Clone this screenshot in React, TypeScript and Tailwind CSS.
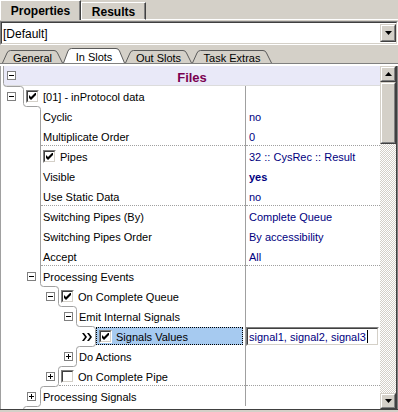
import React from "react";

type Row = {
  label: string;
  depth: number;
  value?: string;
  strong?: boolean;
  box?: "-" | "+";
  check?: boolean;
  sep?: boolean;
  selected?: boolean;
};

const rows: Row[] = [
  { label: "[01] - inProtocol data", depth: 0, box: "-", check: true },
  { label: "Cyclic", depth: 1, value: "no" },
  { label: "Multiplicate Order", depth: 1, value: "0", sep: true },
  { label: "Pipes", depth: 1, check: true, value: "32 :: CysRec :: Result" },
  { label: "Visible", depth: 1, value: "yes", strong: true },
  { label: "Use Static Data", depth: 1, value: "no", sep: true },
  { label: "Switching Pipes (By)", depth: 1, value: "Complete Queue" },
  { label: "Switching Pipes Order", depth: 1, value: "By accessibility" },
  { label: "Accept", depth: 1, value: "All", sep: true },
  { label: "Processing Events", depth: 1, box: "-" },
  { label: "On Complete Queue", depth: 2, box: "-", check: true },
  { label: "Emit Internal Signals", depth: 3, box: "-" },
  { label: "Signals Values", depth: 4, check: true, selected: true },
  { label: "Do Actions", depth: 3, box: "+" },
  { label: "On Complete Pipe", depth: 2, box: "+", check: false, sep: true },
  { label: "Processing Signals", depth: 1, box: "+" },
];

// x of the tree edge for each depth
const LINE = [23, 40, 58, 76, 95];
const GUTTER = ["w-[21px]", "w-[38px]", "w-[56px]", "w-[74px]", "w-[93px]"];
const BOXPL = ["pl-[4px]", "pl-[24px]", "pl-[43px]", "pl-[61px]", "pl-[79px]"];

// staircase outline of the tree, rounded at each step
const contour = (() => {
  const r = 3;
  let px = 3.5;
  let d = `M${px} 0`;
  [...rows.map((x) => x.depth), 0].forEach((depth, i) => {
    const y = 20 + 20 * i + 0.5;
    const x = LINE[depth] + 0.5;
    if (x !== px) {
      const s = x > px ? 1 : -1;
      d += ` V${y - r} Q${px} ${y} ${px + s * r} ${y} H${x - s * r} Q${x} ${y} ${x} ${y + r}`;
      px = x;
    }
  });
  return d + " V400";
})();

const Box = ({ plus }: { plus?: boolean }) => (
  <span className="relative flex h-[9px] w-[9px] items-center justify-center border border-[#808080] bg-white">
    <span className="h-px w-[5px] bg-black" />
    {plus && <span className="absolute h-[5px] w-px bg-black" />}
  </span>
);

const Check = ({ on }: { on: boolean }) => (
  <span className="flex h-[13px] w-[13px] shrink-0 border border-t-[#808080] border-l-[#808080] border-r-white border-b-white">
    <span className="flex flex-1 items-center justify-center border border-t-[#404040] border-l-[#404040] border-r-[#d4d0c8] border-b-[#d4d0c8] bg-white">
      {on && (
        <svg width="7" height="7" viewBox="0 0 7 7">
          <path d="M0 2L2 4L6 0H7V2L2 7L0 5Z" fill="#000" />
        </svg>
      )}
    </span>
  </span>
);

const Chevrons = () => (
  <svg width="10" height="8" viewBox="0 0 10 8">
    <path d="M0 0H2L5 4L2 8H0L3 4Z M5 0H7L10 4L7 8H5L8 4Z" fill="#000" />
  </svg>
);

const Raised = ({ children, className = "" }: { children?: React.ReactNode; className?: string }) => (
  <div className={`border border-t-[#d4d0c8] border-l-[#d4d0c8] border-r-[#404040] border-b-[#404040] bg-[#d4d0c8] ${className}`}>
    <div className="flex h-full w-full items-center justify-center border border-t-white border-l-white border-r-[#808080] border-b-[#808080]">
      {children}
    </div>
  </div>
);

const Arrow = ({ up }: { up?: boolean }) => (
  <svg width="7" height="4" viewBox="0 0 7 4">
    <path d={up ? "M3.5 0L7 4H0Z" : "M0 0H7L3.5 4Z"} fill="#000" />
  </svg>
);

const SlantTab = ({ label, w, active }: { label: string; w: number; active?: boolean }) => {
  const h = active ? 15 : 13;
  const d = `M0.5 ${h} L5 3 Q6 0.5 8.5 0.5 H${w - 9} Q${w - 6.5} 0.5 ${w - 5.5} 3 L${w - 0.5} ${h}`;
  return (
    <div
      className={`relative flex items-center justify-center ${active ? "z-10 -mb-px h-[16px] pb-px" : "h-[13px]"}`}
      style={{ width: w }}
    >
      <svg className="absolute left-0 top-0" width={w} height={h + 1}>
        <path d={d + " Z"} fill={active ? "#ffffff" : "#d4d0c8"} stroke="none" />
        <path d={d} fill="none" stroke="#5a5a5a" />
      </svg>
      <span className={`relative ${active ? "pt-[4px]" : "pt-[3px]"}`}>{label}</span>
    </div>
  );
};

function GridRow({ r }: { r: Row }) {
  const sep = r.sep ? "border-b border-dotted border-[#a0a0a0]" : "";
  return (
    <div className="flex h-[20px] pl-[3px]">
      <div className="flex w-[242px] shrink-0">
        <div className={`${GUTTER[r.depth]} ${BOXPL[r.depth]} flex shrink-0 items-center pt-px`}>
          {r.box && <Box plus={r.box === "+"} />}
          {r.selected && <Chevrons />}
        </div>
        {r.selected ? (
          <div className="my-px mr-[2px] flex flex-1 items-center gap-[4px] border border-dotted border-black bg-[#a6caf0] pl-[2px]">
            <Check on />
            <span className="pt-[3px]">{r.label}</span>
          </div>
        ) : (
          <div className={`flex flex-1 items-center gap-[4px] pl-[2px] pt-px ${sep}`}>
            {r.check !== undefined && <Check on={r.check} />}
            <span className="pt-[2px]">{r.label}</span>
          </div>
        )}
      </div>
      <div className="w-px shrink-0 bg-[#a0a0a0]" />
      {r.selected ? (
        <div className="flex w-[134px] items-center">
          <div className="my-px h-[19px] w-[133px] border border-t-[#808080] border-l-[#808080] border-r-white border-b-white">
            <div className="flex h-full items-center border border-t-[#404040] border-l-[#404040] border-r-[#d4d0c8] border-b-[#d4d0c8] bg-white pl-[1px] text-[#000080]">
              <span className="pt-[2px]">signal1, signal2, signal3</span>
              <span className="ml-px h-[13px] w-px bg-black" />
            </div>
          </div>
        </div>
      ) : (
        <div className={`flex w-[134px] items-center pl-[3px] pt-[3px] text-[#000080] ${r.strong ? "font-bold" : ""} ${sep}`}>
          {r.value}
        </div>
      )}
    </div>
  );
}

export default function App() {
  return (
    <div className="h-[412px] w-[398px] overflow-hidden bg-[#d4d0c8] font-['Liberation_Sans',Arial,sans-serif] text-[11px] leading-none text-black">
      {/* Properties / Results */}
      <div className="flex h-[20px] items-end">
        <div className="flex h-[20px] w-[81px] items-center justify-center border-l border-t border-white border-r border-r-[#404040] pt-px text-[12px] font-bold shadow-[inset_-1px_0_#808080]">
          Properties
        </div>
        <div className="flex h-[18px] w-[65px] items-center justify-center border-l border-t border-b border-white border-r border-r-[#404040] pt-px text-[12px] font-bold shadow-[inset_-1px_0_#808080]">
          Results
        </div>
        <div className="h-px flex-1 bg-white" />
      </div>

      {/* combo */}
      <div className="mt-px h-[24px] border border-t-[#808080] border-l-[#808080] border-r-white border-b-white">
        <div className="flex h-full items-center border border-t-[#404040] border-l-[#404040] border-r-[#d4d0c8] border-b-[#d4d0c8] bg-white pl-[1px] text-[12px]">
          <span className="flex-1 pt-px">[Default]</span>
          <Raised className="h-[18px] w-[16px]">
            <Arrow />
          </Raised>
        </div>
      </div>

      {/* slot tabs */}
      <div className="flex h-[19px] items-end border-b border-[#808080] pl-[2px]">
        <SlantTab label="General" w={61} />
        <SlantTab label="In Slots" w={62} active />
        <SlantTab label="Out Slots" w={67} />
        <SlantTab label="Task Extras" w={80} />
      </div>

      {/* panel */}
      <div className="flex h-[348px] flex-col bg-white">
        <div className="h-[2px]" />
        <div className="flex h-[343px]">
          <div className="relative h-[343px] w-[380px] overflow-hidden">
            <svg className="pointer-events-none absolute left-0 top-0" width="245" height="343">
              <path d={contour} fill="none" stroke="#a0a0a0" />
              <path d="M0.5 0V343" stroke="#a0a0a0" />
            </svg>
            <div className="ml-[4px] flex h-[20px] items-center border-b border-[#dcdcdc] bg-[#e9e9f8] pl-[3px]">
              <Box />
              <span className="flex-1 pr-[12px] pt-[3px] text-center text-[13px] font-bold text-[#7a0050]">Files</span>
            </div>
            {rows.map((r) => (
              <GridRow key={r.label} r={r} />
            ))}
          </div>
          <div className="flex w-[16px] flex-col">
            <Raised className="h-[16px] w-[16px]">
              <Arrow up />
            </Raised>
            <Raised className="h-[62px] w-[16px]" />
            <div className="flex-1 bg-[image:repeating-conic-gradient(#d4d0c8_0%_25%,#ffffff_0%_50%)] bg-[length:2px_2px]" />
            <Raised className="h-[16px] w-[16px]">
              <Arrow />
            </Raised>
          </div>
          <div className="w-[2px] border-l border-[#404040] bg-[#808080]" />
        </div>
        <div className="h-[3px] border-t border-[#404040] bg-[#d4d0c8]" />
      </div>
    </div>
  );
}
